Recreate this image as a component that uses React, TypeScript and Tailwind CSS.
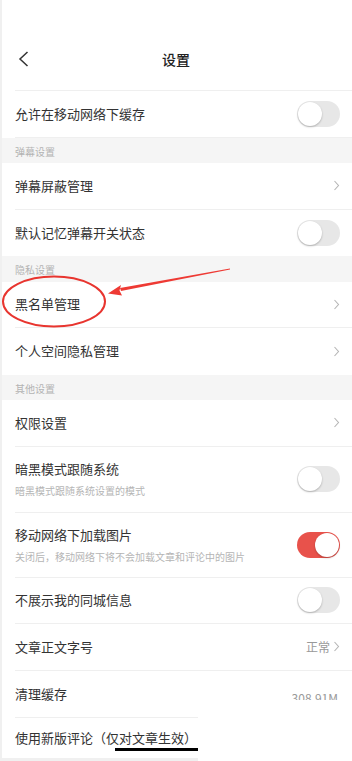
import type { ReactNode } from "react";

const font = { fontFamily: '"Noto Sans CJK SC", "Noto Sans", sans-serif' };

function Chevron() {
  return (
    <svg width="7" height="11" viewBox="0 0 7 11" className="shrink-0">
      <polyline points="1.5,1 5.5,5.5 1.5,10" fill="none" stroke="#b5b5b5" strokeWidth="1.1" />
    </svg>
  );
}

function Toggle({ on = false }: { on?: boolean }) {
  return (
    <div
      className={`relative w-[43px] h-[26px] rounded-full shrink-0 ${
        on ? "bg-[#e8524b]" : "bg-[#e7e7e7]"
      }`}
    >
      <div
        className={`absolute top-[1px] w-[24px] h-[24px] rounded-full bg-white shadow-[0_1px_2px_rgba(0,0,0,0.25)] ${
          on ? "right-[1px]" : "left-[1px]"
        }`}
      />
    </div>
  );
}

function Section({ title, h = "h-[25.5px]" }: { title: string; h?: string }) {
  return (
    <div className={`${h} bg-[#f5f5f5] pl-[13px] flex items-center pt-[2px] text-[10px] text-[#b3b3b3]`}>
      {title}
    </div>
  );
}

function Row({
  title,
  sub,
  right,
  h = "h-[46.5px]",
  last = false,
}: {
  title: string;
  sub?: string;
  right?: ReactNode;
  h?: string;
  last?: boolean;
}) {
  return (
    <div className="pl-[13px]">
      <div
        className={`${h} flex items-center justify-between pr-[12px] ${
          last ? "" : "border-b border-[#efefef]"
        }`}
      >
        <div className="flex flex-col">
          <span className="text-[13px] text-[#333] leading-[18px]">{title}</span>
          {sub && <span className="text-[10px] text-[#b5b5b5] leading-[14px] mt-[6px]">{sub}</span>}
        </div>
        {right}
      </div>
    </div>
  );
}

export default function App() {
  return (
    <div className="relative w-[352px] h-[761px] bg-white overflow-hidden border-l-2 border-[#f0f0f0]" style={font}>
      <div className="h-[28px]" />
      <div className="pl-[13px]">
        <div className="relative h-[63px] flex items-center justify-center border-b border-[#efefef] pr-[15px]">
          <svg width="12" height="16" viewBox="0 0 12 16" className="absolute left-[3px] top-[23px]">
            <polyline points="9.5,1 2,8 9.5,15" fill="none" stroke="#333" strokeWidth="1.5" />
          </svg>
          <span className="text-[14px] font-medium text-[#222]">设置</span>
        </div>
      </div>

      <Row title="允许在移动网络下缓存" right={<Toggle />} />
      <Section title="弹幕设置" />
      <Row title="弹幕屏蔽管理" right={<Chevron />} />
      <Row title="默认记忆弹幕开关状态" right={<Toggle />} last />
      <Section title="隐私设置" />
      <Row title="黑名单管理" right={<Chevron />} />
      <Row title="个人空间隐私管理" right={<Chevron />} last />
      <Section title="其他设置" />
      <Row title="权限设置" right={<Chevron />} />
      <Row title="暗黑模式跟随系统" sub="暗黑模式跟随系统设置的模式" right={<Toggle />} h="h-[66px]" />
      <Row
        title="移动网络下加载图片"
        sub="关闭后，移动网络下将不会加载文章和评论中的图片"
        right={<Toggle on />}
        h="h-[65px]"
      />
      <Row title="不展示我的同城信息" right={<Toggle />} />
      <Row
        title="文章正文字号"
        right={
          <div className="flex items-center gap-[3px] text-[12px] text-[#999]">
            正常
            <Chevron />
          </div>
        }
      />
      <div className="pl-[13px]">
        <div className="h-[46.5px] flex items-center justify-between pr-[14px]">
          <span className="text-[13px] text-[#333]">清理缓存</span>
          <div className="h-[10px] overflow-hidden self-start mt-[19px]">
            <span className="block text-[12px] leading-[16px] text-[#999]">308.91M</span>
          </div>
        </div>
      </div>
      <div className="w-[196px]">
        <div className="ml-[13px] border-t border-[#efefef]" />
        <div className="relative h-[40px] pl-[13px] flex items-center">
          <span className="text-[13px] text-[#333] whitespace-nowrap">使用新版评论（仅对文章生效）</span>
          <div className="absolute left-[113px] right-0 top-[30px] h-[3px] bg-black" />
        </div>
        <div className="h-[5px] bg-[#f0f0f0]" />
      </div>

      <svg className="absolute left-0 top-0 pointer-events-none" width="352" height="761">
        <ellipse cx="52" cy="301.5" rx="51" ry="25" fill="none" stroke="#e8352f" strokeWidth="2" />
        <polygon points="228,268.5 118,288 119,291 228,269.5" fill="#ee3a34" />
        <polygon points="106,293.5 119,285 117.5,290.5 120,295.5" fill="#ee3a34" />
      </svg>
    </div>
  );
}
